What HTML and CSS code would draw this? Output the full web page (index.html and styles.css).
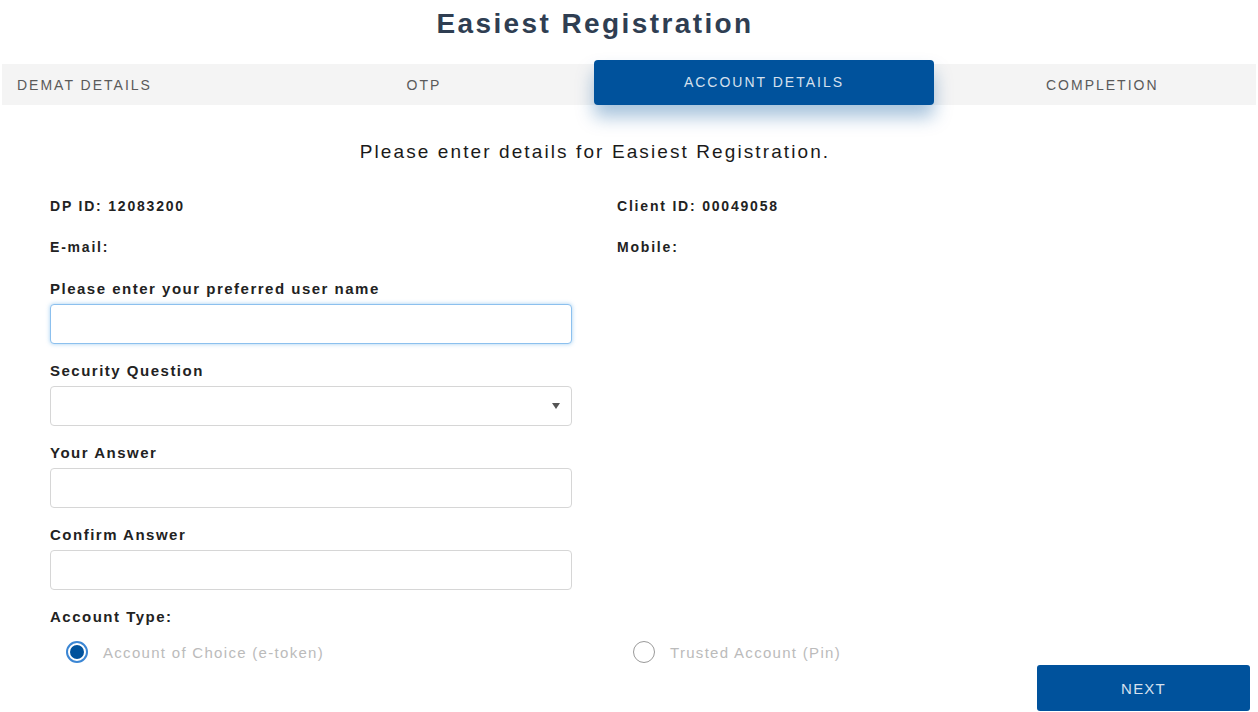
FILE: index.html
```html
<!DOCTYPE html>
<html>
<head>
<meta charset="utf-8">
<link rel="stylesheet" href="styles.css">
</head>
<body>
<div class="page">
  <h1 class="title">Easiest Registration</h1>
  <div class="tabs">
    <div class="tab tab-first">DEMAT DETAILS</div>
    <div class="tab">OTP</div>
    <div class="tab active">ACCOUNT DETAILS</div>
    <div class="tab tab-last">COMPLETION</div>
  </div>
  <p class="subtitle">Please enter details for Easiest Registration.</p>
  <div class="form">
    <div class="info-row">
      <div class="info">DP ID: 12083200</div>
      <div class="info">Client ID: 00049058</div>
    </div>
    <div class="info-row">
      <div class="info">E-mail:</div>
      <div class="info">Mobile:</div>
    </div>
    <div class="field">
      <label class="label">Please enter your preferred user name</label>
      <div class="input focused"></div>
    </div>
    <div class="field">
      <label class="label">Security Question</label>
      <div class="input select"><span class="caret"></span></div>
    </div>
    <div class="field">
      <label class="label">Your Answer</label>
      <div class="input"></div>
    </div>
    <div class="field">
      <label class="label">Confirm Answer</label>
      <div class="input"></div>
    </div>
    <div class="label acct">Account Type:</div>
    <div class="radios">
      <div class="radio-item"><span class="radio checked"></span><span class="radio-text">Account of Choice (e-token)</span></div>
      <div class="radio-item"><span class="radio"></span><span class="radio-text">Trusted Account (Pin)</span></div>
    </div>
  </div>
  <div class="actions"><button class="next">NEXT</button></div>
</div>
</body>
</html>
```
FILE: styles.css
```css
* { box-sizing: border-box; }
html, body { margin: 0; padding: 0; background: #fff; }
body { font-family: "Liberation Sans", Arial, sans-serif; width: 1258px; height: 712px; overflow: hidden; }
.page { padding: 0 2px; }
.title {
  margin: 0;
  padding: 8px 68px 0 0;
  height: 60px;
  text-align: center;
  font-size: 28px;
  font-weight: bold;
  color: #2f3e52;
  letter-spacing: 2.4px;
  line-height: 32px;
}
.tabs {
  display: grid;
  grid-template-columns: 252px 340px 340px 1fr;
  height: 41px;
  margin-top: 4px;
  background: #f4f4f4;
}
.tab {
  display: flex;
  align-items: center;
  justify-content: center;
  font-size: 14px;
  color: #5a5a5a;
  letter-spacing: 2px;
  white-space: nowrap;
}
.tab-first { justify-content: flex-start; padding-left: 15px; }
.tab-last { justify-content: flex-start; padding-left: 112px; }
.tab.active {
  background: #00529c;
  color: #d5e0ee;
  border-radius: 4px;
  margin-top: -4px;
  padding-bottom: 2px;
  box-shadow: 0 12px 18px rgba(0, 82, 156, 0.35);
  position: relative;
  z-index: 1;
}
.subtitle {
  margin: 36px 0 0;
  padding-right: 68px;
  text-align: center;
  font-size: 19px;
  color: #1a1a1a;
  letter-spacing: 2.1px;
  line-height: 22px;
}
.form { padding-left: 48px; margin-top: 34px; }
.info-row { display: grid; grid-template-columns: 567px 1fr; height: 41px; }
.info { font-size: 14px; font-weight: bold; color: #222; letter-spacing: 1.8px; line-height: 18px; }
.field { display: flex; flex-direction: column; height: 82px; }
.label { font-size: 15px; font-weight: bold; color: #222; letter-spacing: 1.5px; line-height: 18px; }
.field .label { padding-top: 1px; margin-bottom: 6px; }
.input {
  width: 522px;
  height: 40px;
  border: 1px solid #d6d6d6;
  border-radius: 4px;
  background: #fff;
  position: relative;
}
.input.focused { border-color: #8cc0ee; box-shadow: 0 0 4px rgba(102, 175, 233, 0.6); }
.caret {
  position: absolute;
  right: 11px;
  top: 16px;
  width: 0;
  height: 0;
  border-left: 4px solid transparent;
  border-right: 4px solid transparent;
  border-top: 6px solid #555;
}
.acct { padding-top: 1px; }
.radios { display: grid; grid-template-columns: 567px 1fr; margin-top: 15px; padding-left: 16px; }
.radio-item { display: flex; align-items: center; gap: 15px; }
.radio {
  width: 22px; height: 22px; border-radius: 50%;
  border: 1.5px solid #9a9a9a; background: #fff; position: relative; flex: none;
}
.radio.checked { border: 2px solid #3b86d4; }
.radio.checked::after {
  content: ""; position: absolute; left: 2px; top: 2px; width: 14px; height: 14px; border-radius: 50%; background: #00529c;
}
.radio-text { font-size: 15px; color: #bbb; letter-spacing: 1.3px; }
.actions { display: flex; justify-content: flex-end; padding-right: 6px; margin-top: 2px; }
.next {
  width: 213px; height: 46px; background: #00529c; color: #d5e0ee; border: none; border-radius: 3px;
  font-family: "Liberation Sans", Arial, sans-serif; font-size: 15px; letter-spacing: 1.2px;
}
```
